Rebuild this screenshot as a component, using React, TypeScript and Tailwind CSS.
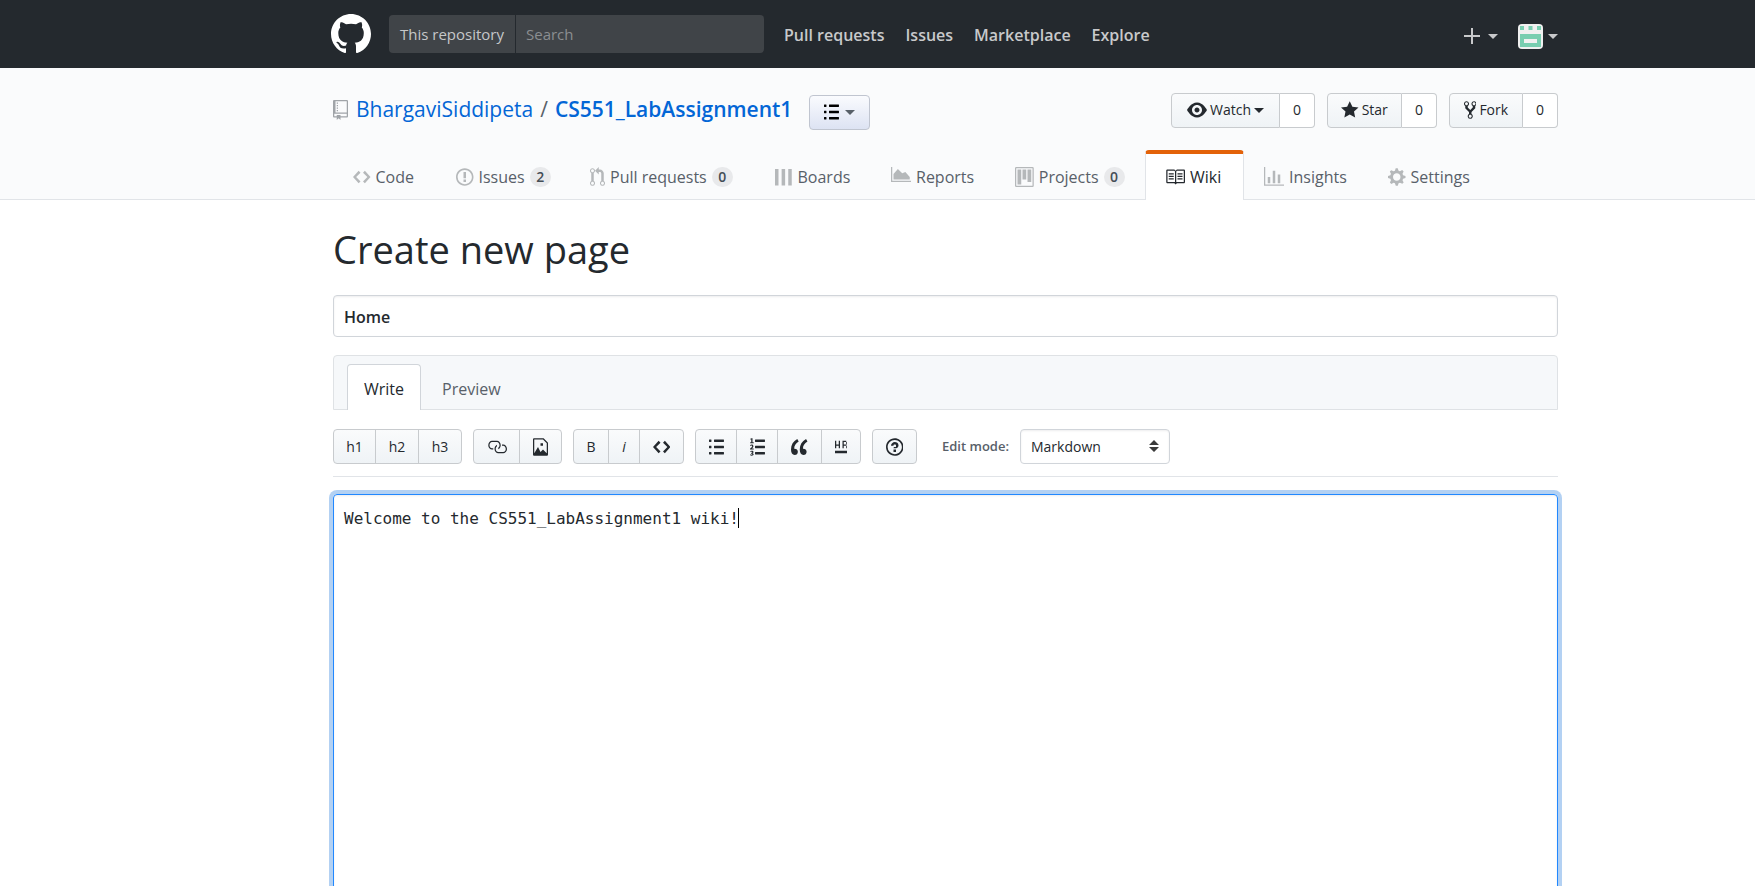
import { useState, type ReactNode } from 'react';

type Glyph = { w: number; d: string };

const glyphs = {
  mark: { w: 16, d: 'M8 0C3.58 0 0 3.58 0 8c0 3.54 2.29 6.53 5.47 7.59.4.07.55-.17.55-.38 0-.19-.01-.82-.01-1.49-2.01.37-2.53-.49-2.69-.94-.09-.23-.48-.94-.82-1.13-.28-.15-.68-.52-.01-.53.63-.01 1.08.58 1.23.82.72 1.21 1.87.87 2.33.66.07-.52.28-.87.51-1.07-1.78-.2-3.64-.89-3.64-3.95 0-.87.31-1.59.82-2.15-.08-.2-.36-1.02.08-2.12 0 0 .67-.21 2.2.82.64-.18 1.32-.27 2-.27.68 0 1.36.09 2 .27 1.53-1.04 2.2-.82 2.2-.82.44 1.1.16 1.92.08 2.12.51.56.82 1.27.82 2.15 0 3.07-1.87 3.75-3.65 3.95.29.25.54.73.54 1.48 0 1.07-.01 1.93-.01 2.2 0 .21.15.46.55.38A8.013 8.013 0 0 0 16 8c0-4.42-3.58-8-8-8z' },
  repo: { w: 12, d: 'M4 9H3V8h1v1zm0-3H3v1h1V6zm0-2H3v1h1V4zm0-2H3v1h1V2zm8-1v12c0 .55-.45 1-1 1H6v2l-1.5-1.5L3 16v-2H1c-.55 0-1-.45-1-1V1c0-.55.45-1 1-1h10c.55 0 1 .45 1 1zm-1 10H1v2h2v-1h3v1h5v-2zm0-10H2v9h9V1z' },
  code: { w: 14, d: 'M9.5 3L8 4.5 11.5 8 8 11.5 9.5 13 14 8 9.5 3zm-5 0L0 8l4.5 5L6 11.5 2.5 8 6 4.5 4.5 3z' },
  issue: { w: 14, d: 'M7 2.3c3.14 0 5.7 2.56 5.7 5.7s-2.56 5.7-5.7 5.7A5.71 5.71 0 0 1 1.3 8c0-3.14 2.56-5.7 5.7-5.7zM7 1C3.14 1 0 4.14 0 8s3.14 7 7 7 7-3.14 7-7-3.14-7-7-7zm1 3H6v5h2V4zm0 6H6v2h2v-2z' },
  pull: { w: 12, d: 'M11 11.28V5c-.03-.78-.34-1.47-.94-2.06C9.46 2.35 8.78 2.03 8 2H7V0L4 3l3 3V4h1c.27.02.48.11.69.31.21.2.3.42.31.69v6.28A1.993 1.993 0 0 0 10 15a1.993 1.993 0 0 0 1-3.72zm-1 2.92c-.66 0-1.2-.55-1.2-1.2 0-.65.55-1.2 1.2-1.2.65 0 1.2.55 1.2 1.2 0 .65-.55 1.2-1.2 1.2zM4 3c0-1.11-.89-2-2-2a1.993 1.993 0 0 0-1 3.72v6.56A1.993 1.993 0 0 0 2 15a1.993 1.993 0 0 0 1-3.72V4.72c.59-.34 1-.98 1-1.72zm-.8 10c0 .66-.55 1.2-1.2 1.2-.65 0-1.2-.55-1.2-1.2 0-.65.55-1.2 1.2-1.2.65 0 1.2.55 1.2 1.2zM2 4.2C1.34 4.2.8 3.65.8 3c0-.65.55-1.2 1.2-1.2.65 0 1.2.55 1.2 1.2 0 .65-.55 1.2-1.2 1.2z' },
  boards: { w: 14, d: 'M0 1.5h2.8v13.2H0zM5.3 1.5h2.8v13.2H5.3zM10.6 1.5h2.8v13.2h-2.8z' },
  reports: { w: 16, d: 'M0 0h1v11h15v1H0zM2 10V5.5L5.5 1.5 9 5l2.5-1L15 8v2z' },
  project: { w: 15, d: 'M10 12h3V2h-3v10zm-4-2h3V2H6v8zm-4 4h3V2H2v12zm-1 1h13V1H1v14zM14 0H1a1 1 0 0 0-1 1v14a1 1 0 0 0 1 1h13a1 1 0 0 0 1-1V1a1 1 0 0 0-1-1z' },
  book: { w: 16, d: 'M3 5h4v1H3V5zm0 3h4V7H3v1zm0 2h4V9H3v1zm11-5h-4v1h4V5zm0 2h-4v1h4V7zm0 2h-4v1h4V9zm2-6v9c0 .55-.45 1-1 1H9.5l-1 1-1-1H2c-.55 0-1-.45-1-1V3c0-.55.45-1 1-1h5.5l1 1 1-1H15c.55 0 1 .45 1 1zm-8 .5L7.5 3H2v9h6V3.5zm7-.5H9.5l-.5.5V12h6V3z' },
  graph: { w: 16, d: 'M16 14v1H0V0h1v14h15zM5 13H3V8h2v5zm4 0H7V3h2v10zm4 0h-2V6h2v7z' },
  gear: { w: 14, d: 'M14 8.77v-1.6l-1.94-.64-.45-1.09.88-1.84-1.13-1.13-1.81.91-1.09-.45-.69-1.92h-1.6l-.63 1.94-1.11.45-1.84-.88-1.13 1.13.91 1.81-.45 1.09L0 7.23v1.59l1.94.64.45 1.09-.88 1.84 1.13 1.13 1.81-.91 1.09.45.69 1.92h1.59l.63-1.94 1.11-.45 1.84.88 1.13-1.13-.92-1.81.47-1.09L14 8.75v.02zM7 11c-1.66 0-3-1.34-3-3s1.34-3 3-3 3 1.34 3 3-1.34 3-3 3z' },
  eye: { w: 16, d: 'M8.06 2C3 2 0 8 0 8s3 6 8.06 6C13 14 16 8 16 8s-3-6-7.94-6zM8 12c-2.2 0-4-1.78-4-4 0-2.2 1.8-4 4-4 2.22 0 4 1.8 4 4 0 2.22-1.78 4-4 4zm2-4c0 1.11-.89 2-2 2-1.11 0-2-.89-2-2 0-1.11.89-2 2-2 1.11 0 2 .89 2 2z' },
  star: { w: 14, d: 'M14 6l-4.9-.64L7 1 4.9 5.36 0 6l3.6 3.26L2.67 14 7 11.67 11.33 14l-.93-4.74L14 6z' },
  fork: { w: 10, d: 'M8 1a1.993 1.993 0 0 0-1 3.72V6L5 8 3 6V4.72A1.993 1.993 0 0 0 2 1a1.993 1.993 0 0 0-1 3.72V6.5l3 3v1.78A1.993 1.993 0 0 0 5 15a1.993 1.993 0 0 0 1-3.72V9.5l3-3V4.72A1.993 1.993 0 0 0 8 1zM2 4.2C1.34 4.2.8 3.65.8 3c0-.65.55-1.2 1.2-1.2.65 0 1.2.55 1.2 1.2 0 .65-.55 1.2-1.2 1.2zm3 10c-.66 0-1.2-.55-1.2-1.2 0-.65.55-1.2 1.2-1.2.65 0 1.2.55 1.2 1.2 0 .65-.55 1.2-1.2 1.2zm3-10c-.66 0-1.2-.55-1.2-1.2 0-.65.55-1.2 1.2-1.2.65 0 1.2.55 1.2 1.2 0 .65-.55 1.2-1.2 1.2z' },
  link: { w: 16, d: 'M4 9h1v1H4c-1.5 0-3-1.69-3-3.5S2.55 3 4 3h4c1.45 0 3 1.69 3 3.5 0 1.41-.91 2.72-2 3.25V8.59c.58-.45 1-1.27 1-2.09C10 5.22 8.98 4 8 4H4c-.98 0-2 1.22-2 2.5S3 9 4 9zm9-3h-1v1h1c1 0 2 1.22 2 2.5S13.98 12 13 12H9c-.98 0-2-1.22-2-2.5 0-.83.42-1.64 1-2.09V6.25c-1.09.53-2 1.84-2 3.25C6 11.31 7.55 13 9 13h4c1.45 0 3-1.69 3-3.5S14.5 6 13 6z' },
  image: { w: 12, d: 'M6 5h2v2H6V5zm6-.5V14c0 .55-.45 1-1 1H1c-.55 0-1-.45-1-1V2c0-.55.45-1 1-1h7.5L12 4.5zM11 5L8 2H1v11l3-5 2 4 2-2 3 3V5z' },
  bullets: { w: 12, d: 'M2 13c0 .59 0 1-.59 1H.59C0 14 0 13.59 0 13c0-.59 0-1 .59-1h.81c.59 0 .59.41.59 1H2zm2.59-9h6.81c.59 0 .59-.41.59-1 0-.59 0-1-.59-1H4.59C4 2 4 2.41 4 3c0 .59 0 1 .59 1zM1.41 7H.59C0 7 0 7.41 0 8c0 .59 0 1 .59 1h.81c.59 0 .59-.41.59-1 0-.59 0-1-.59-1h.01zm0-5H.59C0 2 0 2.41 0 3c0 .59 0 1 .59 1h.81c.59 0 .59-.41.59-1 0-.59 0-1-.59-1h.01zm10 5H4.59C4 7 4 7.41 4 8c0 .59 0 1 .59 1h6.81c.59 0 .59-.41.59-1 0-.59 0-1-.59-1h.01zm0 5H4.59C4 12 4 12.41 4 13c0 .59 0 1 .59 1h6.81c.59 0 .59-.41.59-1 0-.59 0-1-.59-1h.01z' },
  numbers: { w: 12, d: 'M12 13c0 .59 0 1-.59 1H4.59C4 14 4 13.59 4 13c0-.59 0-1 .59-1h6.81c.59 0 .59.41.59 1H12zM4.59 4h6.81c.59 0 .59-.41.59-1 0-.59 0-1-.59-1H4.59C4 2 4 2.41 4 3c0 .59 0 1 .59 1zm6.81 3H4.59C4 7 4 7.41 4 8c0 .59 0 1 .59 1h6.81c.59 0 .59-.41.59-1 0-.59 0-1-.59-1zM2 1h-.72c-.3.19-.58.25-1.03.34V2H1v2.14H.16V5H3v-.86H2V1zm.25 8.13c-.17 0-.45.03-.66.06.53-.56 1.14-1.25 1.14-1.89C2.72 6.52 2.17 6 1.38 6c-.59 0-.97.2-1.38.64l.58.58c.19-.19.38-.38.64-.38.28 0 .48.16.48.52 0 .53-.77 1.2-1.7 2.06V10h3l-.09-.88h-.66v.01zm-.08 3.78v-.03c.44-.19.64-.47.64-.86 0-.7-.56-1.11-1.44-1.11-.48 0-.89.19-1.28.52l.55.64c.25-.2.44-.31.69-.31.27 0 .42.13.42.36 0 .27-.2.44-.86.44v.75c.83 0 .98.17.98.47 0 .25-.23.38-.58.38-.28 0-.56-.14-.81-.38l-.48.66c.3.36.77.56 1.41.56.83 0 1.53-.41 1.53-1.16 0-.5-.31-.81-.77-.94v.01z' },
  quote: { w: 14, d: 'M6.16 3.5C3.73 5.06 2.55 6.67 2.55 9.36c.16-.05.3-.05.44-.05 1.27 0 2.5.86 2.5 2.41 0 1.61-1.03 2.61-2.5 2.61-1.9 0-2.99-1.52-2.99-4.25 0-3.8 1.75-6.53 5.02-8.42L6.16 3.5zm7 0c-2.43 1.56-3.61 3.17-3.61 5.86.16-.05.3-.05.44-.05 1.27 0 2.5.86 2.5 2.41 0 1.61-1.03 2.61-2.5 2.61-1.89 0-2.98-1.52-2.98-4.25 0-3.8 1.75-6.53 5.02-8.42l1.13 1.84z' },
  rule: { w: 10, d: 'M1 7h2v2h1V3H3v3H1V3H0v6h1V7zm9 2V7H9v2h1zm0-3V4H9v2h1zM7 6V4h2V3H6v6h1V7h2V6H7zm-7 7h10v-2H0v2z' },
  help: { w: 14, d: 'M6 10h2v2H6v-2zm4-3.5C10 8.64 8 9 8 9H6c0-.55.45-1 1-1h.5c.28 0 .5-.22.5-.5v-1c0-.28-.22-.5-.5-.5h-1c-.28 0-.5.22-.5.5V7H4c0-1.5 1.5-3 3-3s3 1 3 2.5zM7 2.3c3.14 0 5.7 2.56 5.7 5.7s-2.56 5.7-5.7 5.7A5.71 5.71 0 0 1 1.3 8c0-3.14 2.56-5.7 5.7-5.7zM7 1C3.14 1 0 4.14 0 8s3.14 7 7 7 7-3.14 7-7-3.14-7-7-7z' },
} satisfies Record<string, Glyph>;

type GlyphName = keyof typeof glyphs;

function Icon({ name, className = 'h-5' }: { name: GlyphName; className?: string }) {
  const g = glyphs[name];
  return (
    <svg viewBox={`0 0 ${g.w} 16`} fill="currentColor" fillRule="evenodd" aria-hidden="true" className={`w-auto shrink-0 ${className}`}>
      <path d={g.d} />
    </svg>
  );
}

function Caret({ className = '' }: { className?: string }) {
  return (
    <svg viewBox="0 0 10 5" fill="currentColor" aria-hidden="true" className={`h-[5px] w-[10px] shrink-0 ${className}`}>
      <path d="M0 0h10L5 5z" />
    </svg>
  );
}

const container = 'pl-[333px] pr-[197px]';

const navLinks = ['Pull requests', 'Issues', 'Marketplace', 'Explore'];

function Header() {
  return (
    <header className={`flex h-[68px] items-center bg-[#24292e] ${container}`}>
      <a href="#" aria-label="Homepage" className="-ml-0.5 text-white">
        <Icon name="mark" className="h-10" />
      </a>
      <form className="ml-[18px] flex h-[38px] w-[375px] overflow-hidden rounded bg-[#404448] text-[15px]" onSubmit={(e) => e.preventDefault()}>
        <label htmlFor="search" className="flex w-[127px] shrink-0 items-center justify-center border-r border-[#24292e] text-[#c6c7c8]">
          This repository
        </label>
        <input id="search" type="text" placeholder="Search" className="min-w-0 flex-1 bg-transparent px-2.5 text-white outline-none placeholder:text-[#8b8e91]" />
      </form>
      <nav className="ml-5 flex gap-[21px] pt-0.5 text-base font-semibold text-[#c8c9cb]">
        {navLinks.map((l) => (
          <a key={l} href="#">{l}</a>
        ))}
      </nav>
      <div className="ml-auto flex items-center gap-5 pt-1 text-[#c8c9cb]">
        <button type="button" aria-label="Create new" className="flex items-center gap-2">
          <svg viewBox="0 0 16 16" className="size-4" fill="currentColor" aria-hidden="true">
            <path d="M7 0h2v7h7v2H9v7H7V9H0V7h7z" />
          </svg>
          <Caret />
        </button>
        <button type="button" aria-label="View profile and more" className="flex items-center gap-[5px]">
          <svg viewBox="0 0 25 25" className="size-[25px]" aria-hidden="true">
            <rect width="25" height="25" rx="4" fill="#f0f0f0" />
            <path fill="#78ceb0" fillRule="evenodd" d="M2 2h4v4H2zM10.500 2h4v4h-4zM19 2h4v4h-4zM2 10h21v13H2zM6 15v4h13v-4z" />
          </svg>
          <Caret />
        </button>
      </div>
    </header>
  );
}

const buttonFace = 'bg-linear-to-b from-[#fafbfc] to-[#eff3f6]';

function SocialButton({ icon, label, caret, width }: { icon: GlyphName; label: string; caret?: boolean; width: string }) {
  return (
    <li className="flex h-[35px] text-sm font-medium text-[#24292e]">
      <button type="button" className={`flex items-center justify-center gap-[3px] rounded-l border border-[#c8cbce] ${buttonFace} ${width}`}>
        <Icon name={icon} />
        {label}
        {caret && <Caret />}
      </button>
      <a href="#" aria-label={`${label} count`} className="flex w-[35px] items-center justify-center rounded-r border border-l-0 border-[#c8cbce] bg-white">
        0
      </a>
    </li>
  );
}

const tabs: { icon: GlyphName; label: string; count?: number; width: string }[] = [
  { icon: 'code', label: 'Code', width: 'w-[103px]' },
  { icon: 'issue', label: 'Issues', count: 2, width: 'w-[134px]' },
  { icon: 'pull', label: 'Pull requests', count: 0, width: 'w-[185px]' },
  { icon: 'boards', label: 'Boards', width: 'w-[116px]' },
  { icon: 'reports', label: 'Reports', width: 'w-[124px]' },
  { icon: 'project', label: 'Projects', count: 0, width: 'w-[150px]' },
  { icon: 'book', label: 'Wiki', width: 'w-[99px]' },
  { icon: 'graph', label: 'Insights', width: 'w-[124px]' },
  { icon: 'gear', label: 'Settings', width: 'w-[125px]' },
];

function RepoHead() {
  return (
    <div className={`border-b border-[#e1e4e8] bg-[#fafbfc] ${container}`}>
      <div className="flex h-[82px] items-center pt-0.5">
        <h1 className="flex items-center text-[21px] text-[#586069]">
          <span className="mr-2 text-[#a0a4a8]"><Icon name="repo" /></span>
          <a href="#" className="text-[#0366d6]">BhargaviSiddipeta</a>
          <span className="mx-[7px]">/</span>
          <a href="#" className="font-semibold text-[#0366d6]">CS551_LabAssignment1</a>
        </h1>
        <button type="button" aria-label="Repository boards" className="ml-[17px] mt-1 flex h-[35px] w-[61px] items-center justify-center gap-1.5 rounded border border-[#c0c5d0] bg-linear-to-b from-[#fafbfe] to-[#dde3f3] text-black">
          <Icon name="bullets" />
          <Caret className="text-[#586069]" />
        </button>
        <ul className="ml-auto flex gap-3">
          <SocialButton icon="eye" label="Watch" caret width="w-[109px]" />
          <SocialButton icon="star" label="Star" width="w-[75px]" />
          <SocialButton icon="fork" label="Fork" width="w-[74px]" />
        </ul>
      </div>
      <nav className="-mb-px flex h-[50px] text-base">
        {tabs.map((t) => {
          const active = t.label === 'Wiki';
          return (
            <a
              key={t.label}
              href="#"
              aria-current={active ? 'page' : undefined}
              className={`flex shrink-0 items-center gap-[5px] border-x border-t-4 pl-[19px] ${t.width} ${
                active
                  ? 'rounded-t border-x-[#e1e4e8] border-t-[#e36209] bg-white text-[#24292e]'
                  : 'border-transparent text-[#586069]'
              }`}
            >
              <span className={active ? '' : 'text-[#b5b8ba]'}><Icon name={t.icon} /></span>
              {t.label}
              {t.count !== undefined && (
                <span className="flex h-5 min-w-[21px] items-center justify-center rounded-full bg-[#e8e9eb] text-sm font-semibold text-[#444d56]">{t.count}</span>
              )}
            </a>
          );
        })}
      </nav>
    </div>
  );
}

type Tool = { label: string; width: string; face: ReactNode };

const toolGroups: Tool[][] = [
  [
    { label: 'Heading 1', width: 'w-[43px]', face: 'h1' },
    { label: 'Heading 2', width: 'w-[44px]', face: 'h2' },
    { label: 'Heading 3', width: 'w-[44px]', face: 'h3' },
  ],
  [
    { label: 'Link', width: 'w-[47px]', face: <Icon name="link" /> },
    { label: 'Image', width: 'w-[43px]', face: <Icon name="image" /> },
  ],
  [
    { label: 'Bold', width: 'w-9', face: 'B' },
    { label: 'Italic', width: 'w-8', face: <em>i</em> },
    { label: 'Code', width: 'w-[45px]', face: <Icon name="code" /> },
  ],
  [
    { label: 'Unordered list', width: 'w-[42px]', face: <Icon name="bullets" /> },
    { label: 'Ordered list', width: 'w-[42px]', face: <Icon name="numbers" /> },
    { label: 'Blockquote', width: 'w-[45px]', face: <Icon name="quote" /> },
    { label: 'Horizontal rule', width: 'w-10', face: <Icon name="rule" /> },
  ],
  [{ label: 'Help', width: 'w-[45px]', face: <Icon name="help" /> }],
];

function Toolbar() {
  return (
    <div className="mt-[19px] flex items-center border-b border-[#e1e4e8] pb-3">
      <div className="flex gap-[11px]">
        {toolGroups.map((group) => (
          <div key={group[0].label} className="flex">
            {group.map((tool) => (
              <button
                key={tool.label}
                type="button"
                aria-label={tool.label}
                className={`-ml-px flex h-[35px] items-center justify-center border border-[#c8cbce] text-sm font-medium text-[#24292e] first:ml-0 first:rounded-l last:rounded-r ${buttonFace} ${tool.width}`}
              >
                {tool.face}
              </button>
            ))}
          </div>
        ))}
      </div>
      <label htmlFor="mode" className="ml-[25px] text-[13px] font-semibold text-[#586069]">Edit mode:</label>
      <div className="relative ml-[11px]">
        <select id="mode" defaultValue="Markdown" className="h-[35px] w-[150px] appearance-none rounded border border-[#d1d5da] bg-white px-2.5 text-sm text-[#24292e] shadow-[inset_0_1px_2px_rgba(27,31,35,0.075)]">
          <option>Markdown</option>
          <option>MediaWiki</option>
          <option>Org-mode</option>
          <option>Textile</option>
        </select>
        <svg viewBox="0 0 10 12" fill="#3a3a3a" aria-hidden="true" className="pointer-events-none absolute right-[11px] top-[11px] h-3 w-[10px]">
          <path d="M0 5L5 0l5 5zM0 7h10l-5 5z" />
        </svg>
      </div>
    </div>
  );
}

export default function App() {
  const [body, setBody] = useState('Welcome to the CS551_LabAssignment1 wiki!');
  return (
    <div className="flex h-screen min-h-[640px] flex-col overflow-hidden bg-white font-['Open_Sans','Noto_Sans',sans-serif] text-[#24292e]">
      <Header />
      <RepoHead />
      <main className={`flex flex-1 flex-col ${container}`}>
        <h2 className="mt-6 text-[38px] leading-[50px]">Create new page</h2>
        <input type="text" aria-label="Title" defaultValue="Home" className="mt-[21px] h-[42px] w-full rounded border border-[#d1d5da] px-2.5 pt-0.5 text-base font-semibold shadow-[inset_0_1px_2px_rgba(27,31,35,0.075)] outline-none" />
        <div role="tablist" className="mt-[18px] flex h-[55px] items-end rounded-t border border-[#dfe2e5] bg-[#f6f8fa] pl-[13px] text-base">
          <button type="button" role="tab" aria-selected="true" className="-mb-px h-[46px] w-[74px] rounded-t border border-b-0 border-[#d1d5da] bg-white pt-0.5">Write</button>
          <button type="button" role="tab" aria-selected="false" className="h-[45px] px-[21px] pt-1 text-[#586069]">Preview</button>
        </div>
        <Toolbar />
        <div className="relative -mb-3 mt-[17px] flex flex-1">
          <textarea
            aria-label="Page content"
            value={body}
            onChange={(e) => setBody(e.target.value)}
            className="w-full resize-none rounded border border-[#2188ff] px-2.5 py-3 font-['DejaVu_Sans_Mono',monospace] text-base leading-6 shadow-[0_0_0_4px_rgba(3,102,214,0.3),inset_0_1px_2px_rgba(27,31,35,0.075)] outline-none"
          />
          <span aria-hidden="true" className="pointer-events-none absolute left-[405px] top-3.5 h-5 w-px bg-black" />
        </div>
      </main>
    </div>
  );
}
